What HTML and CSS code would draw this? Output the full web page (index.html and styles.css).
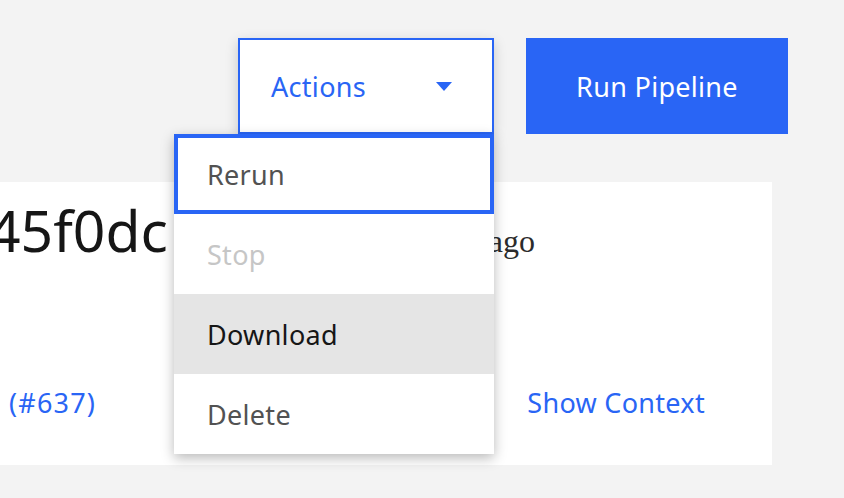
FILE: index.html
```html
<!DOCTYPE html>
<html lang="en">
<head>
<meta charset="utf-8">
<title>Pipeline run</title>
<link rel="stylesheet" href="styles.css">
</head>
<body>
  <header class="toolbar">
    <div class="overflow">
      <button class="btn btn-tertiary" type="button">
        <span>Actions</span>
        <svg class="caret" width="16" height="9" viewBox="0 0 16 9" aria-hidden="true"><path d="M0 0h16L8 9z" fill="currentColor"/></svg>
      </button>
      <ul class="menu">
        <li class="menu-item is-focused">Rerun</li>
        <li class="menu-item is-disabled">Stop</li>
        <li class="menu-item is-hover">Download</li>
        <li class="menu-item">Delete</li>
      </ul>
    </div>
    <button class="btn btn-primary" type="button">Run Pipeline</button>
  </header>

  <section class="card">
    <div class="card-row">
      <h1 class="run-id">45f0dc</h1>
      <span class="meta">Started 2 days ago</span>
    </div>
    <div class="card-links">
      <a class="link link-num" href="#">(#637)</a>
      <a class="link" href="#">Show Context</a>
    </div>
  </section>
</body>
</html>
```

FILE: styles.css
```css
* { box-sizing: border-box; }

html, body {
  margin: 0;
  padding: 0;
  background: #f3f3f3;
  overflow: hidden;
}

body {
  font-family: "Noto Sans", "Open Sans", sans-serif;
  color: #161616;
  width: 844px;
  height: 498px;
}

.toolbar {
  display: flex;
  justify-content: flex-end;
  align-items: flex-start;
  gap: 32px;
  padding: 38px 56px 0 0;
  height: 134px;
}

.btn {
  font-family: inherit;
  font-size: 27px;
  letter-spacing: 0.3px;
  height: 96px;
  margin: 0;
  border-radius: 0;
  cursor: pointer;
}

.btn-tertiary {
  width: 256px;
  display: flex;
  align-items: center;
  justify-content: space-between;
  padding: 0 40px 0 31px;
  background: #ffffff;
  color: #2965f5;
  border: 2px solid #2965f5;
  box-shadow: 0 4px 12px rgba(0, 0, 0, 0.18);
}

.caret { display: block; }

.btn-primary {
  width: 262px;
  background: #2965f5;
  color: #ffffff;
  border: 0;
  text-align: center;
}

.overflow { position: relative; z-index: 2; }

.menu {
  position: absolute;
  top: 96px;
  right: 0;
  width: 320px;
  margin: 0;
  padding: 0;
  list-style: none;
  background: #ffffff;
  box-shadow: 0 4px 12px rgba(0, 0, 0, 0.28);
}

.menu-item {
  height: 80px;
  display: flex;
  align-items: center;
  padding-left: 33px;
  font-size: 27px;
  letter-spacing: 0.3px;
  color: #525252;
}

.menu-item.is-focused { outline: 4px solid #2965f5; outline-offset: -4px; }
.menu-item.is-disabled { color: #c6c6c6; }
.menu-item.is-hover { background: #e5e5e5; color: #161616; }

.card {
  margin-top: 48px;
  width: 772px;
  height: 283px;
  background: #ffffff;
  display: flex;
  flex-direction: column;
}

.card-row {
  display: flex;
  align-items: baseline;
  padding: 8px 237px 0 0;
}

.run-id {
  margin: 0 0 0 -12px;
  font-size: 57px;
  font-weight: 400;
  line-height: 80px;
  color: #161616;
}

.meta {
  flex: 1;
  text-align: right;
  font-family: "Liberation Serif", serif;
  font-size: 32px;
  color: #2b2b2b;
}

.card-links {
  display: flex;
  justify-content: space-between;
  padding: 0 67px 0 9px;
  margin-top: 114px;
}

.link {
  font-size: 27px;
  letter-spacing: 0.3px;
  color: #2965f5;
  text-decoration: none;
}

.link-num { letter-spacing: 1.2px; }
```
